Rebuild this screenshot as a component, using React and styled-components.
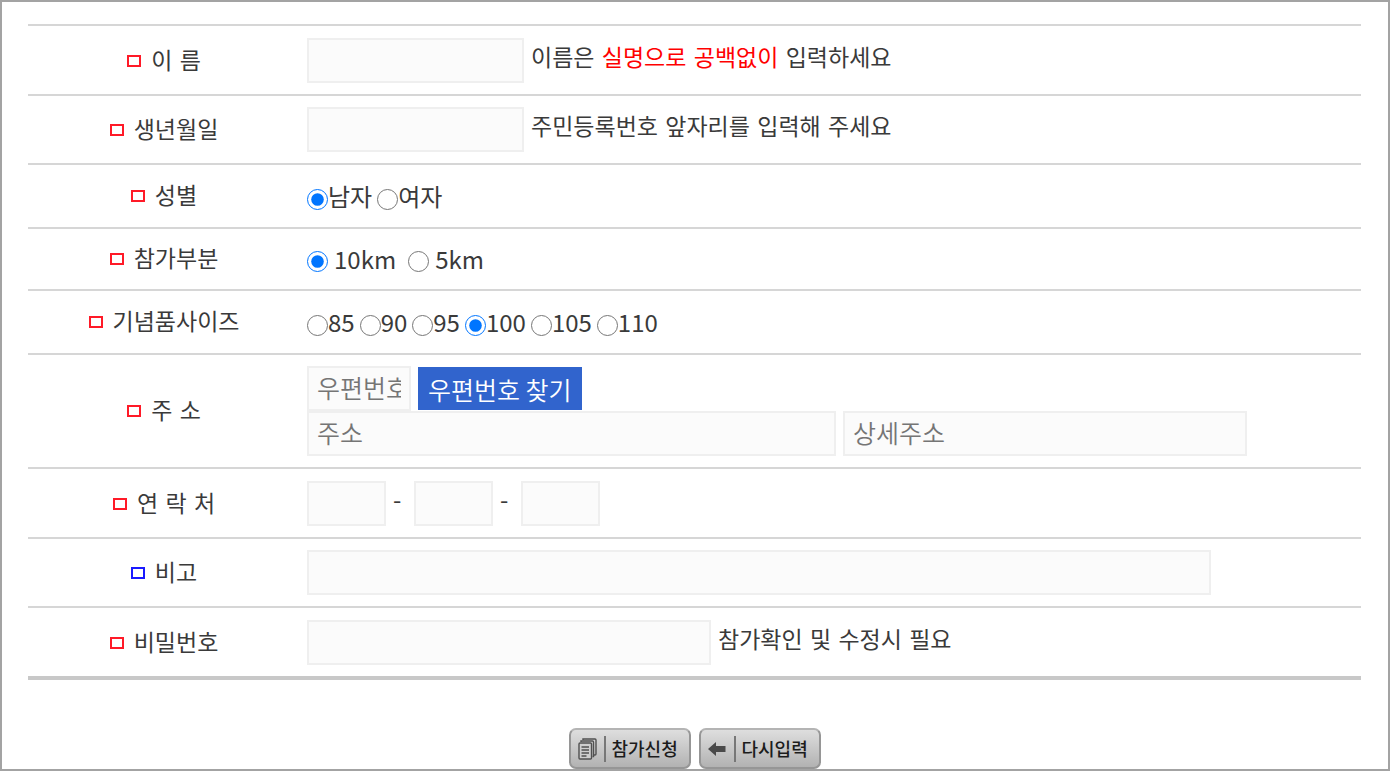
import React from "react";
import styled, { createGlobalStyle } from "styled-components";

const GlobalStyle = createGlobalStyle`
  *,
  *::before {
    box-sizing: border-box;
  }
  body {
    margin: 0;
    background: #fff;
    color: #3a3a3a;
    font-family: "Noto Sans CJK KR", "Liberation Sans", sans-serif;
    font-size: 24px;
    line-height: 32px;
  }
  input,
  button {
    margin: 0;
    font-family: inherit;
  }
`;

const textFont = `"DejaVu Sans", "Noto Sans CJK KR", sans-serif`;

const FormFrame = styled.form`
  padding: 22px 27px 0 26px;
  border: 2px solid #a3a3a3;
`;

const Rows = styled.div`
  border-bottom: 4px solid #c8c8c8;
`;

const RowStyles = styled.div`
  display: grid;
  grid-template-columns: 272px minmax(0, 1fr);
  align-items: center;
  min-height: ${(props) => props.$minHeight || 0}px;
  padding: ${(props) => (props.$roomy ? 12 : 11)}px 0 11px;
  border-top: 2px solid #d6d6d6;
`;

const RowLabel = styled.label`
  display: flex;
  justify-content: center;
  align-items: center;
  gap: 10px;
  font-family: ${textFont};
  font-size: 23px;
  &::before {
    content: "";
    width: 14px;
    height: 12px;
    border: 2px solid ${(props) => (props.$optional ? "#1a1aff" : "#ff1a28")};
  }
`;

const Fields = styled.div`
  display: flex;
  flex-wrap: wrap;
  align-items: flex-start;
  column-gap: 7px;
  padding-left: 7px;
`;

const Break = styled.div`
  flex-basis: 100%;
`;

const TextInput = styled.input`
  width: ${(props) => props.$width}px;
  max-width: 100%;
  height: 45px;
  padding: 0 8px 3px;
  border: 2px solid #efefef;
  border-radius: 0;
  background: #fbfbfb;
  color: #333;
  font-size: 25px;
  font-weight: 350;
  &::placeholder {
    color: #757575;
    opacity: 1;
  }
`;

const Note = styled.span`
  font-family: ${textFont};
  font-size: 23px;
  line-height: 40px;
`;

const Accent = styled.span`
  color: #ff0000;
`;

const Dash = styled.span`
  width: 14px;
  line-height: 36px;
`;

const FindButton = styled.button`
  height: 43px;
  margin-top: 1px;
  padding: 0 10px;
  border: 0;
  background: #3164cd;
  color: #fff;
  font-size: 25px;
  font-weight: 350;
  line-height: 42px;
`;

const RadioGroup = styled.div`
  display: flex;
  column-gap: ${(props) => (props.$spaced ? 12 : 5)}px;
  padding-left: 7px;
`;

const RadioLabel = styled.label`
  display: flex;
  align-items: center;
  gap: ${(props) => (props.$spaced ? 6 : 0)}px;
  input {
    width: 21px;
    height: 21px;
    margin-top: ${(props) => (props.$spaced ? 4 : 6)}px;
    accent-color: #0075ff;
  }
`;

const Actions = styled.div`
  display: flex;
  justify-content: center;
  gap: 8px;
  padding-top: 48px;
`;

const ActionButton = styled.button`
  display: flex;
  align-items: center;
  width: 122px;
  height: 41px;
  padding: 0 0 0 7px;
  border: 2px solid #969696;
  border-top-color: #b4b4b4;
  border-radius: 7px;
  background: linear-gradient(#dedede, #b2b2b2);
  color: #1c1c1c;
  font-size: 18px;
  font-weight: 500;
  line-height: 24px;
  white-space: nowrap;
  svg {
    flex: none;
  }
  span {
    margin-left: 7px;
    padding: 0 0 2px 6px;
    border-left: 2px solid #777;
  }
`;

const Row = ({ label, htmlFor, optional, roomy, minHeight, children }) => (
  <RowStyles $roomy={roomy} $minHeight={minHeight}>
    <RowLabel
      as={htmlFor ? "label" : "div"}
      htmlFor={htmlFor}
      id={htmlFor ? undefined : `${label}-label`}
      $optional={optional}
    >
      {label}
    </RowLabel>
    {children}
  </RowStyles>
);

const Radios = ({ name, label, options, defaultValue, spaced }) => (
  <RadioGroup role="radiogroup" aria-labelledby={`${label}-label`} $spaced={spaced}>
    {options.map((option) => (
      <RadioLabel key={option} $spaced={spaced}>
        <input
          type="radio"
          name={name}
          value={option}
          defaultChecked={option === defaultValue}
        />
        {option}
      </RadioLabel>
    ))}
  </RadioGroup>
);

const PagesIcon = () => (
  <svg width="19" height="22" viewBox="0 0 19 22" fill="none" stroke="#505050" strokeWidth="1.400">
    <path d="M5 2V1h12q1 0 1 1v14q0 1-1 1h-1" />
    <path d="M3 4V3h11.500q1 0 1 1v14.500h-1" />
    <rect x="1" y="5" width="12.500" height="16" rx="1" fill="#cdcdcd" />
    <path d="M3.500 9h7.500M3.500 12h7.500M3.500 15h7.500M3.500 18h5" />
  </svg>
);

const BackIcon = () => (
  <svg width="19" height="22" viewBox="0 0 19 22" fill="#4a4a4a">
    <path d="M0 11L8 4v4h9.500v6H8v4z" />
  </svg>
);

const App = () => {
  return (
    <>
      <GlobalStyle />
      <FormFrame onSubmit={(e) => e.preventDefault()}>
        <Rows>
          <Row label="이 름" htmlFor="name" roomy>
            <Fields>
              <TextInput id="name" type="text" $width={217} />
              <Note>
                이름은 <Accent>실명으로 공백없이</Accent> 입력하세요
              </Note>
            </Fields>
          </Row>
          <Row label="생년월일" htmlFor="birth">
            <Fields>
              <TextInput id="birth" type="text" $width={217} />
              <Note>주민등록번호 앞자리를 입력해 주세요</Note>
            </Fields>
          </Row>
          <Row label="성별" minHeight={64}>
            <Radios name="gender" label="성별" options={["남자", "여자"]} defaultValue="남자" />
          </Row>
          <Row label="참가부분" minHeight={62}>
            <Radios
              name="course"
              label="참가부분"
              options={["10km", "5km"]}
              defaultValue="10km"
              spaced
            />
          </Row>
          <Row label="기념품사이즈" minHeight={64}>
            <Radios
              name="size"
              label="기념품사이즈"
              options={["85", "90", "95", "100", "105", "110"]}
              defaultValue="100"
            />
          </Row>
          <Row label="주 소" htmlFor="zipcode">
            <Fields>
              <TextInput id="zipcode" type="text" placeholder="우편번호" $width={104} />
              <FindButton type="button">우편번호 찾기</FindButton>
              <Break />
              <TextInput type="text" aria-label="주소" placeholder="주소" $width={529} />
              <TextInput type="text" aria-label="상세주소" placeholder="상세주소" $width={404} />
            </Fields>
          </Row>
          <Row label="연 락 처" htmlFor="phone" roomy>
            <Fields>
              <TextInput id="phone" type="tel" $width={79} />
              <Dash>-</Dash>
              <TextInput type="tel" aria-label="연락처 가운데 자리" $width={79} />
              <Dash>-</Dash>
              <TextInput type="tel" aria-label="연락처 끝자리" $width={79} />
            </Fields>
          </Row>
          <Row label="비고" htmlFor="memo" optional>
            <Fields>
              <TextInput id="memo" type="text" $width={904} />
            </Fields>
          </Row>
          <Row label="비밀번호" htmlFor="password" roomy>
            <Fields>
              <TextInput id="password" type="password" $width={404} />
              <Note>참가확인 및 수정시 필요</Note>
            </Fields>
          </Row>
        </Rows>
        <Actions>
          <ActionButton type="submit">
            <PagesIcon />
            <span>참가신청</span>
          </ActionButton>
          <ActionButton type="reset">
            <BackIcon />
            <span>다시입력</span>
          </ActionButton>
        </Actions>
      </FormFrame>
    </>
  );
};

export default App;
